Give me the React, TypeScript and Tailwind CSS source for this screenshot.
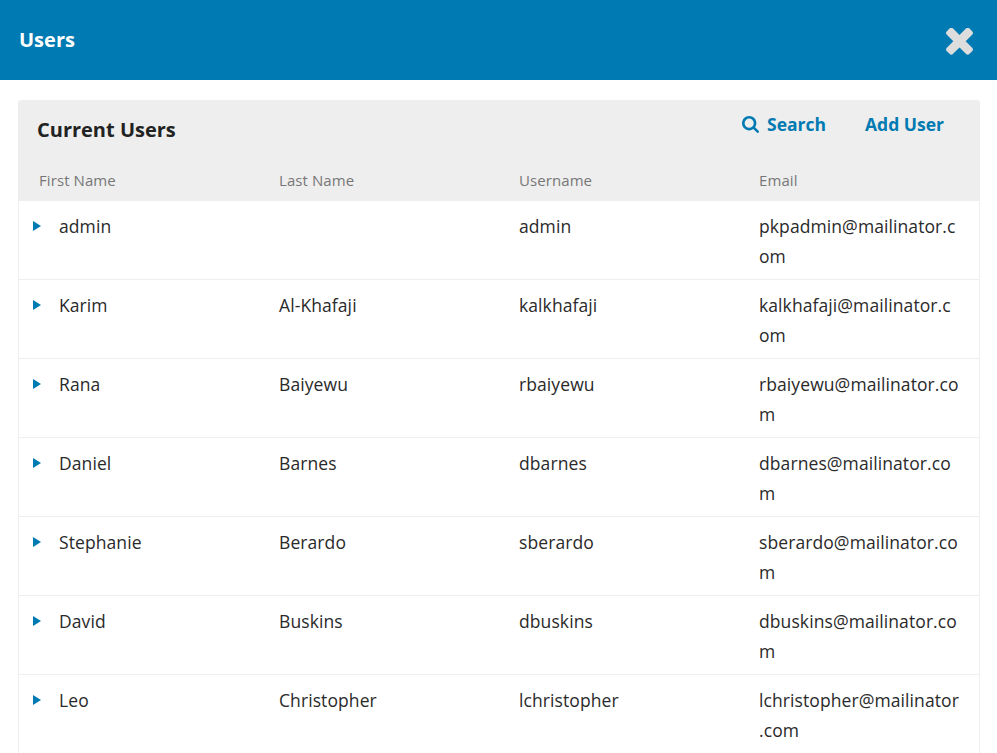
import React from "react";

const users = [
  ["admin", "", "admin", "pkpadmin@mailinator.com"],
  ["Karim", "Al-Khafaji", "kalkhafaji", "kalkhafaji@mailinator.com"],
  ["Rana", "Baiyewu", "rbaiyewu", "rbaiyewu@mailinator.com"],
  ["Daniel", "Barnes", "dbarnes", "dbarnes@mailinator.com"],
  ["Stephanie", "Berardo", "sberardo", "sberardo@mailinator.com"],
  ["David", "Buskins", "dbuskins", "dbuskins@mailinator.com"],
  ["Leo", "Christopher", "lchristopher", "lchristopher@mailinator.com"],
];

export default function App() {
  return (
    <div className="h-[753px] overflow-hidden bg-white font-['Open_Sans',sans-serif] text-[17.5px] leading-[30px] text-[#222]">
      <header className="flex h-20 items-center justify-between bg-[#007ab2] pl-[19px] pr-[24px] text-white">
        <h1 className="text-[20px] font-bold">Users</h1>
        <button aria-label="Close">
          <svg width="27" height="27" viewBox="110 270 1188 1188" fill="#ddd" className="mt-[3px]">
            <path d="M1298 1214q0 40-28 68l-136 136q-28 28-68 28t-68-28l-294-294-294 294q-28 28-68 28t-68-28l-136-136q-28-28-28-68t28-68l294-294-294-294q-28-28-28-68t28-68l136-136q28-28 68-28t68 28l294 294 294-294q28-28 68-28t68 28l136 136q28 28 28 68t-28 68l-294 294 294 294q28 28 28 68z" />
          </svg>
        </button>
      </header>
      <main className="mx-[18px] mt-5 w-[962px]">
        <div className="h-[101px] rounded-t-[3px] bg-[#eee]">
          <div className="flex h-[60px] items-start justify-between pl-[19px] pr-[36px]">
            <h2 className="mt-[15px] text-[20px] font-bold">Current Users</h2>
            <div className="mt-[9px] flex gap-[39px] text-[17.5px] font-bold text-[#007ab2]">
              <span className="flex items-center gap-[8px]">
                <svg width="17" height="17" viewBox="0 0 1664 1664" fill="currentColor" className="mt-px">
                  <path d="M1152 704q0-185-131.500-316.500t-316.500-131.500-316.500 131.500-131.500 316.500 131.500 316.500 316.500 131.500 316.500-131.500 131.500-316.500zm512 832q0 52-38 90t-90 38q-54 0-90-38l-343-342q-179 124-399 124-143 0-273.500-55.500t-225-150-150-225-55.500-273.500 55.500-273.500 150-225 225-150 273.500-55.500 273.500 55.500 225 150 150 225 55.500 273.500q0 220-124 399l343 343q37 37 37 90z" />
                </svg>
                Search
              </span>
              <span>Add User</span>
            </div>
          </div>
          <div className="grid grid-cols-4 px-px text-[15px] tracking-[0.08px] text-[#777]">
            {["First Name", "Last Name", "Username", "Email"].map((t) => (
              <span key={t} className="pl-5 pt-[5px] leading-[30px]">{t}</span>
            ))}
          </div>
        </div>
        <div className="border-x border-[#eee] tracking-[0.09px] text-[#2a2a2a]">
          {users.map((u) => (
            <div key={u[3]} className="grid h-[79px] grid-cols-4 border-b border-[#eee]">
              <div className="flex items-start pt-[10px]">
                <svg width="8" height="10" viewBox="0 0 8 10" className="ml-[14px] mr-[18px] mt-[10px]" fill="#007ab2">
                  <path d="M0 0L8 5L0 10Z" />
                </svg>
                {u[0]}
              </div>
              <div className="pl-5 pt-[10px]">{u[1]}</div>
              <div className="pl-5 pt-[10px]">{u[2]}</div>
              {/* A zero-width space lets the address wrap before its dot */}
              <div className="break-all pl-5 pr-[18px] pt-[10px]">{u[3].replace(".", "\u200b.")}</div>
            </div>
          ))}
        </div>
      </main>
    </div>
  );
}
